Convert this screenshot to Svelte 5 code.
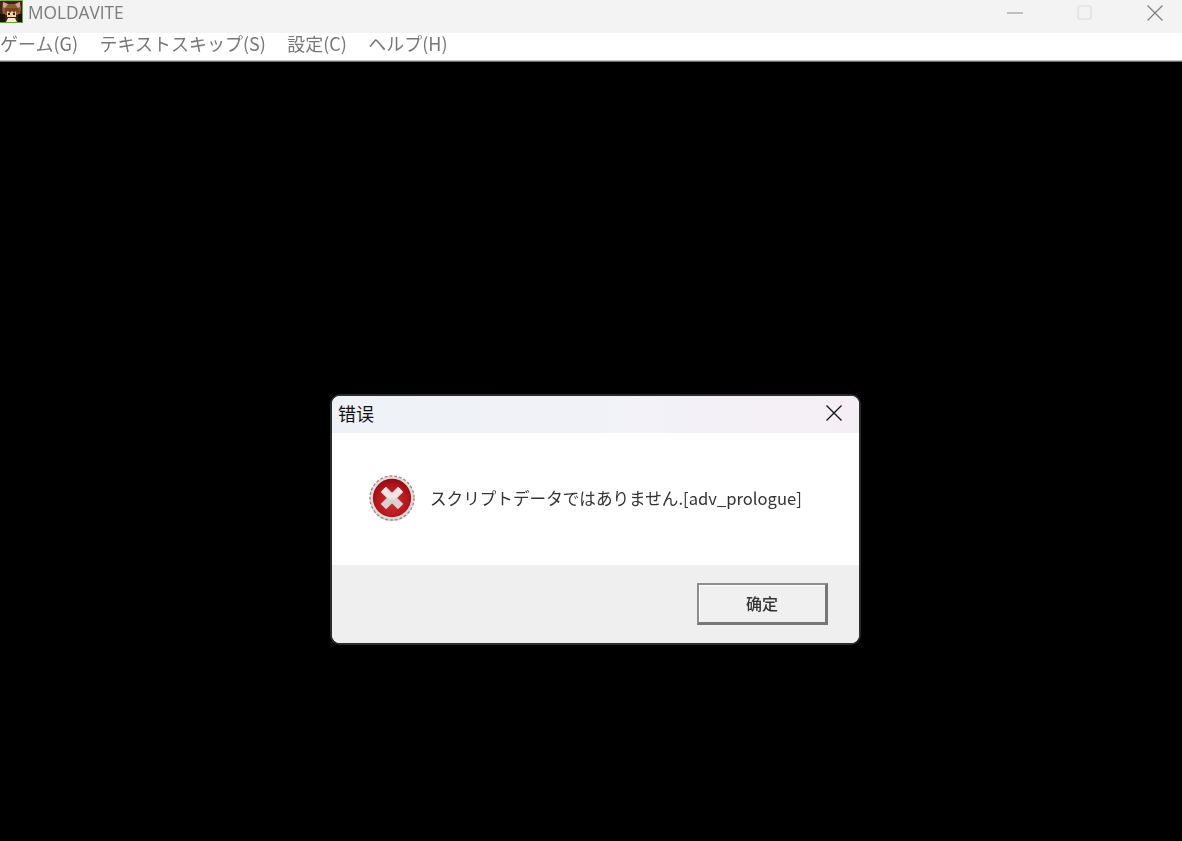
<script>
  const menus = ['ゲーム(G)', 'テキストスキップ(S)', '設定(C)', 'ヘルプ(H)'];
</script>

<div class="window">
  <header class="titlebar">
    <div class="brand">
      <svg class="app-icon" viewBox="0 0 23 23" aria-hidden="true">
        <rect width="23" height="23" fill="#3a2617" />
        <path d="M2 8 3 2l4 2h9l4-2 1 6-1 7H3z" fill="#8e5a34" />
        <path d="M3 2l5 2-3 4-2-1zM20 2l-5 2 3 4 2-1z" fill="#d9a08e" />
        <path d="M7 11h9v6H7z" fill="#f0d2b4" />
        <path d="M5 8h13l1 5-3-2-2 2-2-2-2 2-2-2-3 2z" fill="#74441f" />
        <rect x="8" y="13" width="2" height="2" fill="#33221a" />
        <rect x="13" y="13" width="2" height="2" fill="#33221a" />
        <path d="M8 18h7l2 4H6z" fill="#eef0c8" />
        <path d="M0 14h5v8H0zM18 14h5v8h-5z" fill="#17140f" />
        <rect x="0" y="22" width="23" height="1" fill="#6aa03c" />
        <rect x="22" y="0" width="1" height="23" fill="#6aa03c" />
        <rect x="0" y="0" width="23" height="1" fill="#7fb04a" />
      </svg>
      <span class="app-name">MOLDAVITE</span>
    </div>
    <div class="controls">
      <svg class="ctl minimize" viewBox="0 0 16 16" aria-hidden="true"><path d="M0 8h16" stroke="#8c8c8c" stroke-width="1" /></svg>
      <svg class="ctl maximize" viewBox="0 0 16 16" aria-hidden="true"><rect x="1" y="1" width="13" height="13" rx="2" fill="none" stroke="#dcdcdc" stroke-width="1.2" /></svg>
      <svg class="ctl close" viewBox="0 0 16 16" aria-hidden="true"><path d="M0.5 0.5l15 15M15.5 0.5l-15 15" stroke="#7d7d7d" stroke-width="1.2" /></svg>
    </div>
  </header>

  <nav class="menubar">
    {#each menus as m}
      <span class="menu-item">{m}</span>
    {/each}
  </nav>

  <main class="stage"></main>

  <div class="dialog" role="alertdialog">
    <div class="dlg-title">
      <span class="dlg-caption">错误</span>
      <svg class="dlg-close" viewBox="0 0 16 16" aria-hidden="true"><path d="M0.5 0.5l15 15M15.5 0.5l-15 15" stroke="#111" stroke-width="1.3" /></svg>
    </div>
    <div class="dlg-body">
      <svg class="err-icon" viewBox="0 0 48 48" aria-hidden="true">
        <defs>
          <radialGradient id="redfill" cx="50%" cy="60%" r="60%">
            <stop offset="0%" stop-color="#d0302f" />
            <stop offset="70%" stop-color="#b5141a" />
            <stop offset="100%" stop-color="#8e0c14" />
          </radialGradient>
        </defs>
        <circle cx="24" cy="26" r="22.5" fill="#b5b5b5" opacity="0.5" />
        <circle cx="24" cy="24" r="23" fill="#e4dcdc" stroke="#a08888" stroke-width="1.4" stroke-dasharray="3 2" />
        <circle cx="24" cy="24" r="20" fill="url(#redfill)" />
        <path d="M15 15 33 33M33 15 15 33" stroke="#d8d2d2" stroke-width="8" fill="none" />
        <path d="M15 15 24 24M33 15 24 24" stroke="#ebe7e7" stroke-width="6" fill="none" />
      </svg>
      <p class="dlg-msg">スクリプトデータではありません.[adv_prologue]</p>
    </div>
    <div class="dlg-foot">
      <button class="ok" type="button"><span class="ok-label">确定</span></button>
    </div>
  </div>
</div>

<style>
  :global(body) {
    margin: 0;
    background: #000;
  }
  .window {
    position: relative;
    width: 1182px;
    height: 841px;
    display: flex;
    flex-direction: column;
    overflow: hidden;
    background: #000;
    font-family: "Noto Sans CJK JP", "Noto Sans", sans-serif;
  }
  .titlebar {
    height: 33px;
    flex: none;
    background: #f3f3f3;
    display: flex;
    justify-content: space-between;
    align-items: center;
  }
  .brand {
    display: flex;
    align-items: center;
    gap: 5px;
    height: 100%;
    align-self: flex-start;
  }
  .app-icon {
    width: 23px;
    height: 23px;
    align-self: flex-start;
    filter: blur(0.5px);
  }
  .app-name {
    font-family: "Open Sans", "Noto Sans", sans-serif;
    font-size: 17.3px;
    color: #7b7b7b;
    line-height: 26px;
    align-self: flex-start;
    filter: blur(0.25px);
  }
  .controls {
    display: flex;
    align-items: center;
    height: 100%;
    padding-right: 19px;
  }
  .ctl {
    width: 16px;
    height: 16px;
    display: block;
    margin-bottom: 8px;
  }
  .minimize {
    margin-right: 54px;
  }
  .maximize {
    margin-right: 54px;
  }
  .menubar {
    height: 27px;
    flex: none;
    background: #fff;
    display: flex;
    gap: 21.4px;
    align-items: flex-start;
    color: #777;
    font-size: 18px;
    border-bottom: 1px solid #c0c0c0;
  }
  .menu-item {
    line-height: 20px;
    white-space: nowrap;
    filter: blur(0.3px);
  }
  .stage {
    flex: 1;
    background: #000;
    border-top: 1px solid #6c6c6c;
  }
  .dialog {
    position: absolute;
    left: 330px;
    top: 394px;
    width: 527px;
    height: 247px;
    border: 2px solid #2b2b2b;
    border-radius: 10px;
    overflow: hidden;
    display: flex;
    flex-direction: column;
    background: #fff;
  }
  .dlg-title {
    height: 37px;
    flex: none;
    box-sizing: border-box;
    background: linear-gradient(90deg, #eef2f7 0%, #f1f2f7 50%, #f5eff5 100%);
    display: flex;
    align-items: center;
    justify-content: space-between;
    padding: 0 17px 3px 6px;
  }
  .dlg-caption {
    font-family: "Noto Sans CJK SC", sans-serif;
    font-size: 18px;
    color: #111;
    line-height: 30px;
  }
  .dlg-close {
    width: 16px;
    height: 16px;
    display: block;
  }
  .dlg-body {
    height: 132px;
    flex: none;
    display: flex;
    align-items: center;
    gap: 15px;
    padding: 0 0 2px 37px;
    box-sizing: border-box;
    background: #fff;
  }
  .err-icon {
    width: 46px;
    height: 46px;
    flex: none;
    filter: blur(0.6px);
  }
  .dlg-msg {
    margin: 0;
    font-size: 16.6px;
    color: #333;
    white-space: nowrap;
    line-height: 24px;
    filter: blur(0.25px);
  }
  .dlg-foot {
    flex: 1;
    background: #efefef;
    display: flex;
    align-items: flex-start;
    justify-content: flex-end;
    padding: 18px 31px 0 0;
  }
  .ok {
    width: 131px;
    height: 42px;
    box-sizing: border-box;
    background: #f0f0f0;
    border: 2px solid;
    border-color: #8e8e8e #777 #777 #8e8e8e;
    border-bottom-width: 3px;
    border-right-width: 3px;
    box-shadow: inset 1px 1px 0 #fff;
    font-family: "Noto Sans CJK SC", sans-serif;
    font-size: 16px;
    font-weight: 500;
    color: #333;
    padding: 0 0 2px;
  }
  .ok-label {
    display: block;
    line-height: 20px;
    filter: blur(0.25px);
  }
</style>
